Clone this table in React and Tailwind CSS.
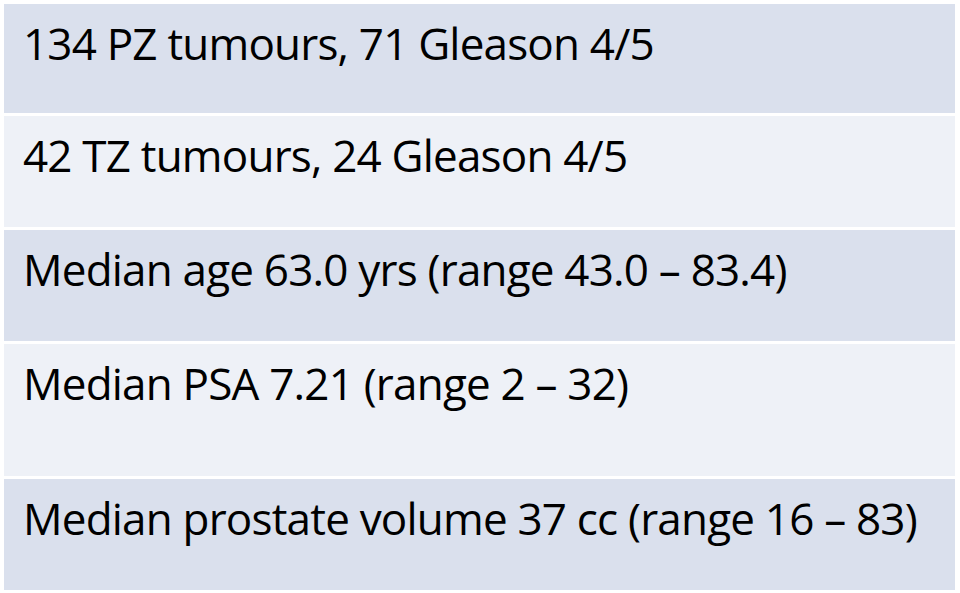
const rows = [
  { text: "134 PZ tumours, 71 Gleason 4/5", h: "h-[109px]", bg: "bg-[#dae0ed]" },
  { text: "42 TZ tumours, 24 Gleason 4/5", h: "h-[111px]", bg: "bg-[#eef1f7]" },
  { text: "Median age 63.0 yrs (range 43.0 – 83.4)", h: "h-[111px]", bg: "bg-[#dae0ed]" },
  { text: "Median PSA 7.21 (range 2 – 32)", h: "h-[132px]", bg: "bg-[#eef1f7]" },
  { text: "Median prostate volume 37 cc (range 16 – 83)", h: "h-[111px]", bg: "bg-[#dae0ed]" },
];

export default function App() {
  return (
    <div className="w-[960px] h-[593px] bg-white pt-[4px] pl-[4px]">
      <div className="w-[951px] flex flex-col gap-[3px]">
        {rows.map((r, i) => (
          <div
            key={i}
            className={`${r.h} ${r.bg} pl-[19px] pt-[11px] text-black text-[44px] leading-[56px] tracking-[-0.8px] whitespace-nowrap`}
            style={{ fontFamily: '"Open Sans", sans-serif' }}
          >
            {r.text}
          </div>
        ))}
      </div>
    </div>
  );
}
